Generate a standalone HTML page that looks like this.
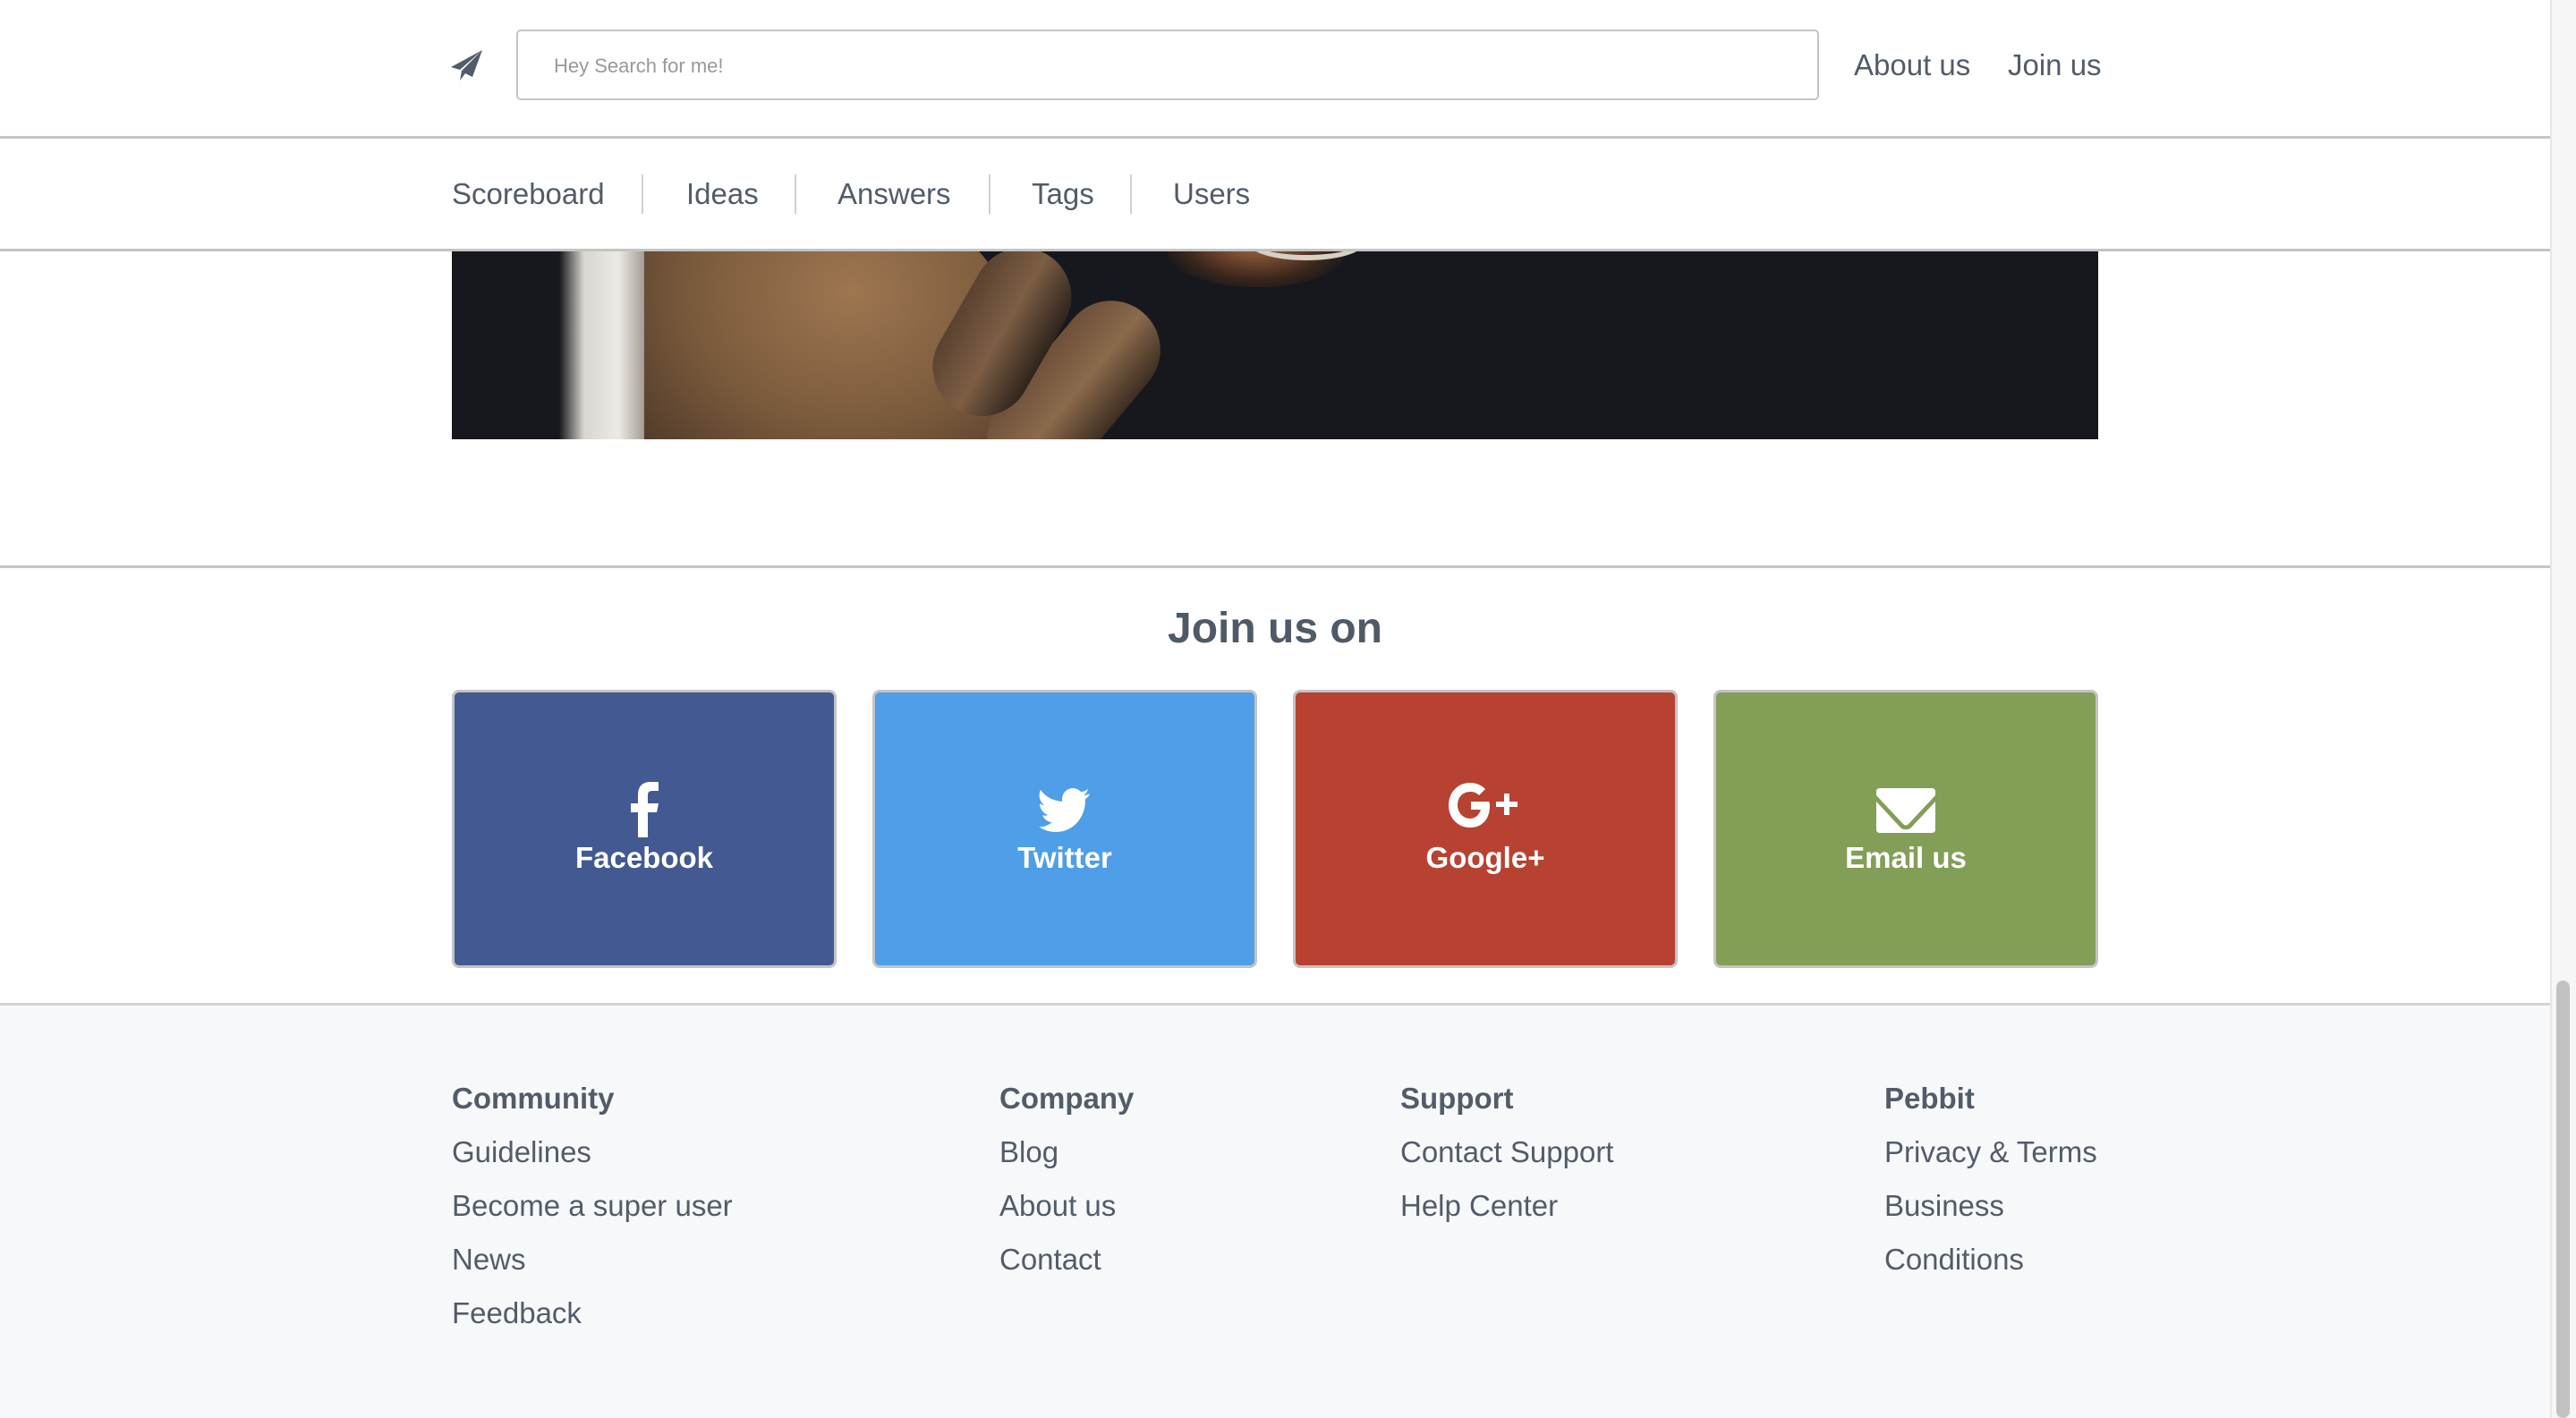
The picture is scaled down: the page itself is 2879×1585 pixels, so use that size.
<!DOCTYPE html>
<html><head><meta charset="utf-8"><style>
*{margin:0;padding:0;box-sizing:border-box}
body{width:2879px;height:1585px;overflow:hidden;background:#fff;font-family:"Liberation Sans",sans-serif;color:#525c69;position:relative}
.a{position:absolute;white-space:nowrap}
.hl{position:absolute;left:0;width:2850px;height:3px;background:#c4c4c4}
.nav{font-size:33px;top:198px}
.sep{position:absolute;top:195px;width:2px;height:44px;background:#d0d0d0}
.card{position:absolute;top:771px;width:430px;height:311px;border-radius:8px;border:3px solid #c4c4c4;color:#fff;text-align:center}
.card .lbl{position:absolute;left:0;right:0;top:166px;font-size:33px;font-weight:bold}
.card svg{position:absolute;left:50%;transform:translateX(-50%)}
.ft{font-size:33px;color:#525c69}
.fh{font-weight:bold}
</style></head><body>
<!-- header -->
<svg class="a" style="left:504px;top:56px" width="36" height="34" viewBox="0 0 36 34"><path d="M35 0 L0 19 L10 22 Z M35 0 L12 23 L10 34 L16 26 L24 30 Z" fill="#525c69"/></svg>
<div class="a" style="left:577px;top:33px;width:1456px;height:79px;border:2px solid #c4c4c4;border-radius:5px"></div>
<div class="a" style="left:619px;top:61px;font-size:22px;color:#999">Hey Search for me!</div>
<div class="a" style="left:2072px;top:54px;font-size:33px">About us</div>
<div class="a" style="left:2244px;top:54px;font-size:33px">Join us</div>
<div class="hl" style="top:152px"></div>
<div class="a nav" style="left:505px">Scoreboard</div>
<div class="sep" style="left:717px"></div>
<div class="a nav" style="left:767px">Ideas</div>
<div class="sep" style="left:888px"></div>
<div class="a nav" style="left:936px">Answers</div>
<div class="sep" style="left:1105px"></div>
<div class="a nav" style="left:1153px">Tags</div>
<div class="sep" style="left:1263px"></div>
<div class="a nav" style="left:1311px">Users</div>
<div class="hl" style="top:278px"></div>
<!-- image -->
<div class="a" style="left:505px;top:281px;width:1840px;height:210px;background:#17181d;overflow:hidden">
 <div class="a" style="left:120px;top:0;width:110px;height:210px;background:linear-gradient(90deg,#17181d,#d9d5cf 25%,#eceae6 60%,#a8a197 85%,#3a3128)"></div>
 <div class="a" style="left:215px;top:-60px;width:420px;height:300px;border-radius:60px 180px 20px 20px;background:radial-gradient(ellipse at 55% 35%,#9e7650,#7a5a3c 55%,#4a3626)"></div>
 <div class="a" style="left:640px;top:40px;width:110px;height:240px;border-radius:60px;transform:rotate(40deg);background:linear-gradient(90deg,#6d5039,#8b6a4c,#3d2e22)"></div>
 <div class="a" style="left:560px;top:-10px;width:110px;height:200px;border-radius:55px;transform:rotate(30deg);background:linear-gradient(90deg,#5a4230,#7d5e44,#2e241c)"></div>
 <div class="a" style="left:800px;top:-40px;width:200px;height:80px;border-radius:50%;background:radial-gradient(ellipse at 50% 30%,#b7724a,#3a261b 60%,#17181d 80%)"></div>
 <div class="a" style="left:890px;top:-30px;width:130px;height:40px;border-radius:50%;border:6px solid #d8d0c4;border-top:none"></div>
</div>
<div class="hl" style="top:632px"></div>
<div class="a" style="left:0;width:2850px;top:675px;text-align:center;font-size:48px;font-weight:bold;color:#4f5a67">Join us on</div>
<!-- cards -->
<div class="card" style="left:505px;background:#425a91">
 <svg style="top:100px" width="34" height="62" viewBox="0 0 34 62"><path d="M10 62 V34 H2 V24 H10 V15 C10 5 15 0 24 0 H33 V10 H26 C22 10 21 12 21 15 V24 H33 L31 34 H21 V62 Z" fill="#fff"/></svg>
 <div class="lbl">Facebook</div></div>
<div class="card" style="left:975px;background:#4e9ee8">
 <svg style="top:107px" width="58" height="50" viewBox="0 0 58 50"><path d="M57 6 C55 7 53 8 50 8 C53 6 54 4 55 1 C52 3 50 4 47 4 C44 1 41 0 38 0 C31 0 26 6 26 12 L26 15 C16 14 8 10 2 2 C-1 8 1 15 6 19 C4 19 2 18 1 17 C1 23 5 28 10 30 C8 31 6 31 4 30 C6 35 10 38 15 38 C10 42 4 44 0 43 C6 47 12 49 19 49 C40 49 52 31 52 14 V12 C54 11 56 9 57 6 Z" fill="#fff"/></svg>
 <div class="lbl">Twitter</div></div>
<div class="card" style="left:1445px;background:#b84232">
 <svg style="top:100px" width="84" height="52" viewBox="0 0 84 52"><path d="M46 22 H26 V31 H37 C35 37 31 41 25 41 C17 41 11 34 11 26 C11 17 17 11 25 11 C29 11 32 12 35 15 L42 8 C37 3 31 1 25 1 C11 1 1 12 1 26 C1 40 11 51 25 51 C39 51 47 41 47 27 C47 25 47 24 46 22 Z" fill="#fff"/><rect x="63" y="13" width="6" height="24" fill="#fff"/><rect x="54" y="22" width="24" height="6" fill="#fff"/></svg>
 <div class="lbl">Google+</div></div>
<div class="card" style="left:1915px;background:#839e57">
 <svg style="top:107px" width="66" height="50" viewBox="0 0 66 50"><path d="M4 0 H62 C65 0 66 2 66 4 V8 L36 40 C34 42 32 42 30 40 L0 8 V4 C0 2 1 0 4 0 Z" fill="#fff"/><path d="M0 15 L27 44 C30 47 36 47 39 44 L66 15 V46 C66 48 65 50 62 50 H4 C1 50 0 48 0 46 Z" fill="#fff"/></svg>
 <div class="lbl">Email us</div></div>
<!-- footer -->
<div class="a" style="left:0;top:1121px;width:2850px;height:464px;background:#f7f8fa;border-top:3px solid #d4d4d4"></div>
<div class="a ft fh" style="left:505px;top:1209px">Community</div>
<div class="a ft" style="left:505px;top:1269px">Guidelines</div>
<div class="a ft" style="left:505px;top:1329px">Become a super user</div>
<div class="a ft" style="left:505px;top:1389px">News</div>
<div class="a ft" style="left:505px;top:1449px">Feedback</div>
<div class="a ft fh" style="left:1117px;top:1209px">Company</div>
<div class="a ft" style="left:1117px;top:1269px">Blog</div>
<div class="a ft" style="left:1117px;top:1329px">About us</div>
<div class="a ft" style="left:1117px;top:1389px">Contact</div>
<div class="a ft fh" style="left:1565px;top:1209px">Support</div>
<div class="a ft" style="left:1565px;top:1269px">Contact Support</div>
<div class="a ft" style="left:1565px;top:1329px">Help Center</div>
<div class="a ft fh" style="left:2106px;top:1209px">Pebbit</div>
<div class="a ft" style="left:2106px;top:1269px">Privacy &amp; Terms</div>
<div class="a ft" style="left:2106px;top:1329px">Business</div>
<div class="a ft" style="left:2106px;top:1389px">Conditions</div>
<!-- scrollbar -->
<div class="a" style="left:2850px;top:0;width:29px;height:1585px;background:#f6f6f6;border-left:2px solid #e6e6e6"></div>
<div class="a" style="left:2857px;top:1096px;width:15px;height:489px;border-radius:8px;background:#c2c2c2"></div>
</body></html>
